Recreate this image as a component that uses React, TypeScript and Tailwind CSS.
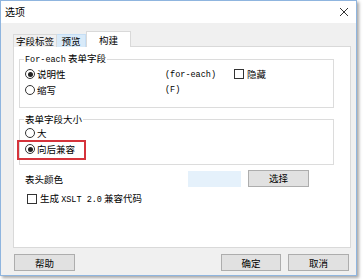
import React from "react";

const font = "font-['Noto_Sans_CJK_SC',sans-serif]";

function Mono({ children }: { children: React.ReactNode }) {
  return <span className="font-['Liberation_Mono',monospace] text-[8.5px]">{children}</span>;
}

function Radio({ checked }: { checked?: boolean }) {
  return (
    <span className="flex h-[10px] w-[10px] shrink-0 items-center justify-center rounded-full border border-[#333] bg-white">
      {checked && <span className="h-[5px] w-[5px] rounded-full bg-[#222]" />}
    </span>
  );
}

function Check() {
  return <span className="block h-[10px] w-[10px] shrink-0 border border-[#333] bg-white" />;
}

function Button({ label, className }: { label: string; className?: string }) {
  return (
    <div
      className={
        "flex h-[17px] items-center justify-center border border-[#adadad] bg-[#e1e1e1] " +
        (className ?? "")
      }
    >
      {label}
    </div>
  );
}

export default function App() {
  return (
    <div className={`h-[280px] w-[363px] bg-white text-[9.5px] leading-[12px] text-black ${font}`}>
      <div className="flex h-[276px] w-[357px] flex-col border border-[#8fb5df] bg-[#f0f0f0] shadow-[2px_2px_3px_rgba(0,0,0,0.35)]">
        {/* Title bar */}
        <div className="flex h-[22px] items-center justify-between bg-white pl-[4px] pr-[7px]">
          <span className="text-[10px]">选项</span>
          <svg width="10" height="10" viewBox="0 0 10 10">
            <path d="M1 1 L9 9 M9 1 L1 9" stroke="#333" strokeWidth="1" />
          </svg>
        </div>

        <div className="flex flex-1 flex-col pl-[12px] pr-[5px] pt-[8px]">
          {/* Tabs */}
          <div className="relative z-10 flex h-[16px] items-end">
            <div className="flex h-[13px] w-[44px] items-center justify-center border border-b-0 border-[#d9d9d9] bg-[#f0f0f0]">
              字段标签
            </div>
            <div className="flex h-[13px] w-[29px] items-center justify-center border border-b-0 border-l-0 border-[#c5def5] bg-[#d8eaf9]">
              预览
            </div>
            <div className="flex h-[16px] w-[45px] items-center justify-center border border-b-0 border-[#d9d9d9] bg-white">
              构建
            </div>
          </div>

          {/* Panel */}
          <div className="-mt-px flex h-[202px] w-[338px] flex-col border border-[#d9d9d9] bg-white pl-[5px]">
            <fieldset className="mt-[5px] w-[315px] border border-[#dcdcdc] pb-[9px]">
              <legend className="ml-[4px] px-[1px] leading-[12px]">
                <Mono>For-each</Mono> 表单字段
              </legend>
              <div className="flex h-[16px] items-center pl-[5px]">
                <div className="flex w-[140px] items-center gap-[2px]">
                  <Radio checked />
                  <span>说明性</span>
                </div>
                <div className="w-[69px]">
                  <Mono>(for-each)</Mono>
                </div>
                <div className="flex items-center gap-[3px]">
                  <Check />
                  <span>隐藏</span>
                </div>
              </div>
              <div className="flex h-[16px] items-center pl-[5px]">
                <div className="flex w-[140px] items-center gap-[2px]">
                  <Radio />
                  <span>缩写</span>
                </div>
                <Mono>(F)</Mono>
              </div>
            </fieldset>

            <fieldset className="mt-[5px] w-[315px] border border-[#dcdcdc] pb-[7px]">
              <legend className="ml-[4px] px-[1px] leading-[12px]">表单字段大小</legend>
              <div className="flex h-[16px] items-center gap-[2px] pl-[5px]">
                <Radio />
                <span>大</span>
              </div>
              <div className="relative flex h-[16px] items-center gap-[2px] pl-[5px]">
                <Radio checked />
                <span>向后兼容</span>
                <span className="absolute left-[-3px] top-[-1px] h-[20px] w-[69px] border-2 border-[#d5333b]" />
              </div>
            </fieldset>

            <div className="mt-[6px] flex h-[16px] items-center pl-[6px]">
              <span className="w-[163px]">表头颜色</span>
              <div className="h-[16px] w-[53px] bg-[#e5f1fb]" />
              <Button label="选择" className="ml-[7px] h-[16px] w-[61px] -translate-y-px" />
            </div>

            <div className="mt-[4px] flex h-[16px] items-center gap-[3px] pl-[8px]">
              <Check />
              <span>
                生成 <Mono>XSLT 2.0</Mono> 兼容代码
              </span>
            </div>
          </div>

          {/* Bottom buttons */}
          <div className="mt-[6px] flex items-center">
            <Button label="帮助" className="ml-px w-[61px]" />
            <Button label="确定" className="ml-[146px] w-[60px]" />
            <Button label="取消" className="ml-[7px] w-[61px]" />
          </div>
        </div>
      </div>
    </div>
  );
}
